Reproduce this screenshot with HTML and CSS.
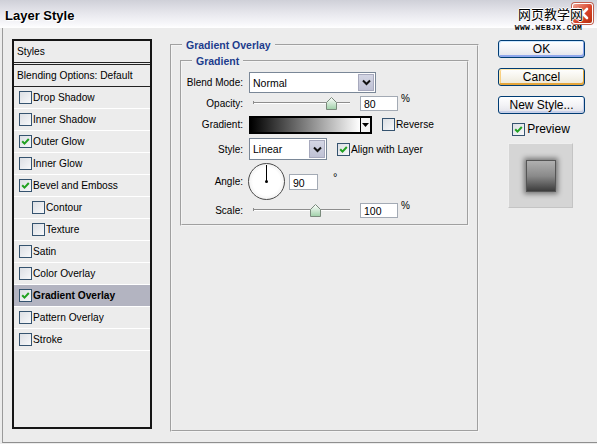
FILE: index.html
```html
<!DOCTYPE html>
<html>
<head>
<meta charset="utf-8">
<link rel="stylesheet" href="styles.css">
</head>
<body>
<div class="window">
  <div class="titlebar">
    <span class="title">Layer Style</span>
    <div class="close"><svg width="19" height="19" viewBox="0 0 19 19"><path d="M5 5 L14 14 M14 5 L5 14" stroke="#fff" stroke-width="2.6" stroke-linecap="round"/></svg></div>
    <div class="watermark"><span class="wm-cn">网页教学网</span><span class="wm-url">WWW.WEBJX.COM</span></div>
  </div>
  <div class="frame">
    <div class="styles-panel">
      <div class="sp-head">Styles</div>
      <div class="sp-blend">Blending Options: Default</div>
      <div class="sp-row"><span class="cb"></span>Drop Shadow</div>
      <div class="sp-row"><span class="cb"></span>Inner Shadow</div>
      <div class="sp-row"><span class="cb"><svg viewBox="0 0 11 11"><path d="M2.2 5.2 L4.5 7.6 L8.8 3" /></svg></span>Outer Glow</div>
      <div class="sp-row"><span class="cb"></span>Inner Glow</div>
      <div class="sp-row"><span class="cb"><svg viewBox="0 0 11 11"><path d="M2.2 5.2 L4.5 7.6 L8.8 3" /></svg></span>Bevel and Emboss</div>
      <div class="sp-row sub"><span class="cb"></span>Contour</div>
      <div class="sp-row sub"><span class="cb"></span>Texture</div>
      <div class="sp-row"><span class="cb"></span>Satin</div>
      <div class="sp-row"><span class="cb"></span>Color Overlay</div>
      <div class="sp-row active"><span class="cb"><svg viewBox="0 0 11 11"><path d="M2.2 5.2 L4.5 7.6 L8.8 3" /></svg></span>Gradient Overlay</div>
      <div class="sp-row"><span class="cb"></span>Pattern Overlay</div>
      <div class="sp-row"><span class="cb"></span>Stroke</div>
    </div>

    <fieldset class="group outer">
      <legend>Gradient Overlay</legend>
      <fieldset class="group inner">
        <legend>Gradient</legend>
        <div class="form">
          <label class="lbl r1">Blend Mode:</label>
          <div class="ctl r1">
            <div class="select wide"><span class="val">Normal</span><span class="drop"><svg width="9" height="7" viewBox="0 0 9 7"><path d="M1 1.5 L4.5 5 L8 1.5" stroke="#111" stroke-width="2" fill="none"/></svg></span></div>
          </div>

          <label class="lbl r2">Opacity:</label>
          <div class="ctl r2">
            <div class="slider"><div class="track"></div><svg class="thumb" style="left:77px" width="11" height="13" viewBox="0 0 11 13"><defs><linearGradient id="tg" x1="0" y1="0" x2="0" y2="1"><stop offset="0" stop-color="#ffffff"/><stop offset="1" stop-color="#9fd0a8"/></linearGradient></defs><path d="M0.5 5.5 L5.5 0.5 L10.5 5.5 L10.5 12.5 L0.5 12.5 Z" fill="url(#tg)" stroke="#7a8a7c"/></svg></div>
            <div class="num">80</div><span class="unit">%</span>
          </div>

          <label class="lbl r3">Gradient:</label>
          <div class="ctl r3">
            <div class="gradient"><span class="ramp"></span><span class="arrow"><svg width="7" height="4" viewBox="0 0 7 4"><path d="M0 0 H7 L3.5 4 Z" fill="#000"/></svg></span></div>
            <span class="cb"></span><span class="ctext">Reverse</span>
          </div>

          <label class="lbl r4">Style:</label>
          <div class="ctl r4">
            <div class="select narrow"><span class="val">Linear</span><span class="drop"><svg width="9" height="7" viewBox="0 0 9 7"><path d="M1 1.5 L4.5 5 L8 1.5" stroke="#111" stroke-width="2" fill="none"/></svg></span></div>
            <span class="cb"><svg viewBox="0 0 11 11"><path d="M2.2 5.2 L4.5 7.6 L8.8 3" /></svg></span><span class="ctext">Align with Layer</span>
          </div>

          <label class="lbl r5">Angle:</label>
          <div class="ctl r5">
            <div class="dial"><span class="hand"></span><span class="pin"></span></div>
            <div class="num small">90</div><span class="deg">°</span>
          </div>

          <label class="lbl r6">Scale:</label>
          <div class="ctl r6">
            <div class="slider"><div class="track"></div><svg class="thumb" style="left:61px" width="11" height="13" viewBox="0 0 11 13"><path d="M0.5 5.5 L5.5 0.5 L10.5 5.5 L10.5 12.5 L0.5 12.5 Z" fill="url(#tg)" stroke="#7a8a7c"/></svg></div>
            <div class="num">100</div><span class="unit">%</span>
          </div>
        </div>
      </fieldset>
    </fieldset>

    <div class="actions">
      <button class="btn ok">OK</button>
      <button class="btn cancel">Cancel</button>
      <button class="btn plain">New Style...</button>
      <div class="preview-toggle"><span class="cb"><svg viewBox="0 0 11 11"><path d="M2.2 5.2 L4.5 7.6 L8.8 3" /></svg></span><span class="ptext">Preview</span></div>
      <div class="preview"><span class="swatch"></span></div>
    </div>
  </div>
</div>
</body>
</html>
```

FILE: styles.css
```css
* { box-sizing: border-box; }
html, body { margin: 0; padding: 0; }
body {
  background: #e6e6e6;
  font-family: "Liberation Sans", Arial, sans-serif;
  font-size: 10px;
  color: #000;
}
.window {
  width: 597px;
  height: 444px;
  display: flex;
  flex-direction: column;
  background: #ececec;
  position: relative;
  overflow: hidden;
}
.titlebar {
  height: 28px;
  flex: none;
  display: flex;
  align-items: center;
  padding-left: 5px;
  background: linear-gradient(#cfd0d8, #e6e6ec 45%, #f7f7fa 85%, #ffffff);
  position: relative;
}
.title {
  font: bold 13px "Liberation Sans", Arial, sans-serif;
  color: #000;
  margin-top: 2px;
  text-shadow: 0 0 2px #fff, 1px 1px 0 #fff;
}
.close {
  position: absolute;
  right: 4px;
  top: 3px;
  width: 21px;
  height: 21px;
  border-radius: 3px;
  border: 1px solid #fff;
  background: linear-gradient(135deg, #f0a090, #d8452a 55%, #b8300f);
  display: flex;
  align-items: center;
  justify-content: center;
  box-shadow: 0 0 0 1px #c06050;
}
.watermark {
  position: absolute;
  left: 514px;
  top: 6px;
  display: flex;
  flex-direction: column;
  align-items: center;
}
.wm-cn {
  font: 13px "Noto Sans CJK SC", sans-serif;
  line-height: 15px;
  color: #000;
  margin-left: 4px;
  text-shadow: 1px 0 0 #fff, -1px 0 0 #fff, 0 1px 0 #fff, 0 -1px 0 #fff;
}
.wm-url {
  font: bold 8px "Liberation Mono", monospace;
  line-height: 8px;
  margin-top: 3px;
  letter-spacing: 0.4px;
  color: #000;
  text-shadow: 0 0 1px #fff;
}
.frame {
  flex: 1;
  margin-left: 2px;
  margin-bottom: 1px;
  border-left: 1px solid #9a9a9a;
  border-bottom: 1px solid #8f8f8f;
  display: flex;
  align-items: flex-start;
  padding: 11px 0 0 9px;
  background: #ececec;
}

/* Styles list */
.styles-panel {
  width: 140px;
  height: 390px;
  flex: none;
  border: 2px solid #151515;
  background: #ececec;
  font-size: 10.2px;
}
.sp-head {
  height: 24px;
  padding: 5px 0 0 3px;
  border-bottom: 3px double #222;
}
.sp-blend {
  height: 22px;
  padding: 5px 0 0 3px;
  border-bottom: 1px solid #222;
}
.sp-row {
  height: 22px;
  display: flex;
  align-items: center;
  gap: 1px;
  padding-left: 5px;
  border-bottom: 1px solid #fff;
}
.sp-row.sub { padding-left: 18px; }
.sp-row.active {
  background: #b3b4c1;
  font-weight: bold;
}
.cb {
  width: 13px;
  height: 13px;
  flex: none;
  border: 1px solid #35536f;
  background: linear-gradient(135deg, #dcdfe4, #f7f8fa);
  display: inline-flex;
  align-items: center;
  justify-content: center;
}
.cb svg { width: 11px; height: 11px; }
.cb path { stroke: #21a121; stroke-width: 2; fill: none; }

/* group boxes */
.group {
  margin: 0;
  min-width: 0;
  border: 2px groove #f4f4f4;
}
.group legend {
  font-weight: bold;
  font-size: 10.5px;
  line-height: 12px;
  color: #1c3c8c;
  padding: 0 4px;
}
.outer {
  width: 309px;
  height: 393px;
  margin-left: 18px;
  padding: 4px 8px 0 8px;
  flex: none;
}
.outer > legend { margin-left: 2px; }
.inner {
  padding: 4px 0 4px 0;
}
.inner > legend { margin-left: 10px; }

.form {
  display: grid;
  grid-template-columns: 61px 1fr;
  grid-template-rows: 22px 21px 21px 28px 37px 20px;
  column-gap: 6px;
}
.lbl {
  text-align: right;
  align-self: center;
  white-space: nowrap;
}
.ctl {
  display: flex;
  align-items: center;
}
.select {
  display: flex;
  height: 21px;
  border: 1px solid #7a8797;
  background: #fff;
}
.select.wide { width: 127px; }
.select.narrow { width: 78px; height: 22px; }
.select .val {
  flex: 1;
  padding: 4px 0 0 3px;
  font-size: 10.5px;
}
.select .drop {
  width: 16px;
  flex: none;
  margin: 1px;
  background: linear-gradient(#d4d6e4, #bfc1d4);
  border: 1px solid #a7a9bd;
  display: flex;
  align-items: center;
  justify-content: center;
}
.slider {
  width: 103px;
  height: 15px;
  position: relative;
  flex: none;
}
.track {
  position: absolute;
  left: 4px;
  right: 2px;
  top: 6px;
  height: 2px;
  border-top: 1px solid #8d8d8d;
  border-bottom: 1px solid #fff;
}
.track::before {
  content: "";
  position: absolute;
  left: 0;
  top: -2px;
  width: 1px;
  height: 3px;
  background: #8d8d8d;
}
.thumb {
  position: absolute;
  top: 1px;
}
.num {
  width: 38px;
  height: 15px;
  margin-left: 8px;
  border: 1px solid #a3aab4;
  background: #fff;
  padding: 1px 0 0 3px;
  font-size: 10.5px;
  line-height: 12px;
}
.num.small {
  width: 29px;
  height: 16px;
  margin-left: 4px;
  padding-top: 2px;
}
.unit {
  margin-left: 3px;
  align-self: flex-start;
  margin-top: 0;
  font-size: 10px;
}
.deg {
  margin-left: 15px;
  align-self: flex-start;
  margin-top: 8px;
  font-size: 11px;
}
.gradient {
  display: flex;
  width: 123px;
  height: 18px;
  border: 2px solid #000;
  margin-top: 1px;
}
.ramp {
  flex: 1;
  background: linear-gradient(to right, #000, #fff);
  border-right: 1px solid #000;
}
.arrow {
  width: 9px;
  background: #f4f4f4;
  display: flex;
  align-items: center;
  justify-content: center;
}
.r3 .cb { margin-left: 10px; }
.r4 .cb { margin-left: 10px; }
.ctext { margin-left: 1px; font-size: 10.2px; }
.dial {
  width: 37px;
  height: 37px;
  margin-left: -1px;
  border-radius: 50%;
  border: 1px solid #4a4a4a;
  background: radial-gradient(circle, #fff 55%, #f0f0f0 75%, #b8b8b8 100%);
  position: relative;
  flex: none;
}
.hand {
  position: absolute;
  left: 17px;
  top: 1px;
  width: 1px;
  height: 17px;
  background: #000;
}
.pin {
  position: absolute;
  left: 16px;
  top: 16px;
  width: 3px;
  height: 3px;
  background: #000;
  border-radius: 50%;
}

/* right column */
.actions {
  width: 87px;
  margin-left: 19px;
  padding-top: 1px;
  display: flex;
  flex-direction: column;
  align-items: center;
  flex: none;
}
.btn {
  width: 87px;
  height: 18px;
  margin: 0 0 10px 0;
  padding: 0;
  border: 1px solid #003c74;
  border-radius: 3px;
  font: 12px "Liberation Sans", Arial, sans-serif;
  line-height: 15px;
  color: #000;
  background: linear-gradient(#ffffff, #f3f3f6 50%, #e2e2ea);
}
.btn.ok {
  box-shadow: inset 1px 1px 0 #cee7ff, inset -1px -2px 0 #8fa7ec;
}
.btn.cancel {
  background: linear-gradient(#ffffff, #f6f4ec 50%, #ebe6d6);
  box-shadow: inset 1px 1px 0 #ffe9b0, inset -1px -2px 0 #e5a53a, inset 2px 0 0 #f8cf80;
}
.btn.plain {
  box-shadow: inset -1px -2px 0 #c8d0e8;
}
.preview-toggle {
  display: flex;
  align-items: center;
  height: 14px;
  margin-top: -2px;
  gap: 2px;
  margin-left: -1px;
}
.ptext { font-size: 12px; }
.preview {
  width: 65px;
  height: 65px;
  margin-top: 7px;
  margin-left: -2px;
  background: #d5d5d5;
  border: 1px solid #efefef;
  border-right-color: #c4c4c4;
  border-bottom-color: #c4c4c4;
  display: flex;
  align-items: center;
  justify-content: center;
}
.swatch {
  width: 30px;
  height: 32px;
  background: linear-gradient(#b0b0b0, #8a8a8a 50%, #3c3c3c);
  box-shadow: 0 0 5px 2px rgba(0,0,0,0.45);
  border: 1px solid #555;
}
```
